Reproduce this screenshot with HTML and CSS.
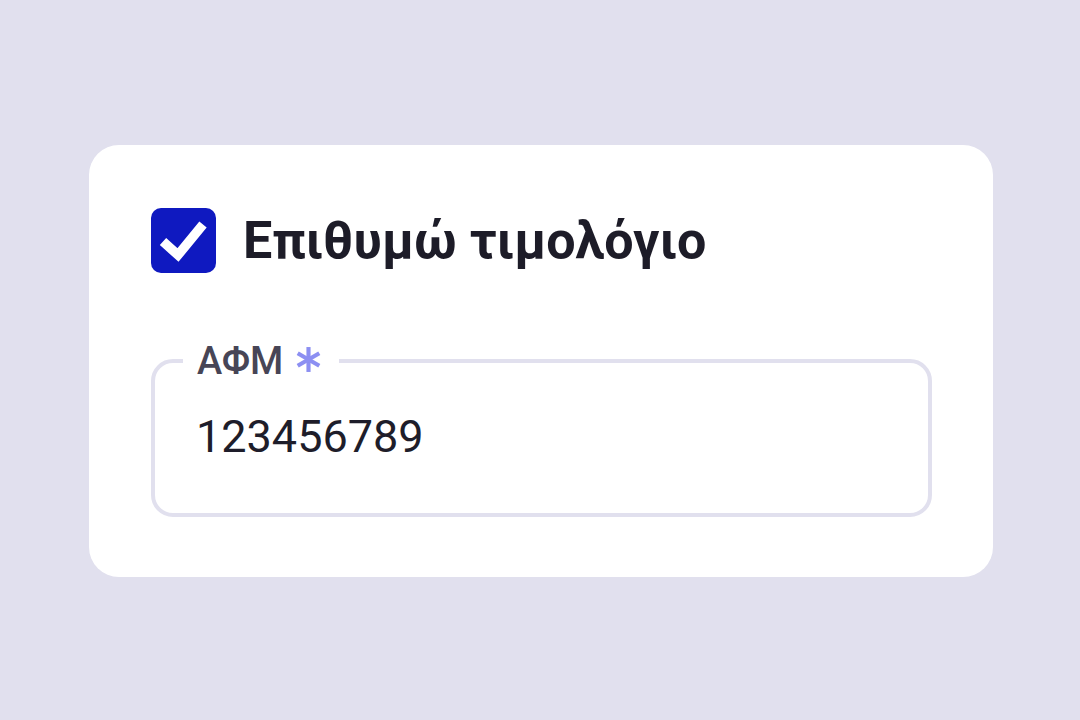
FILE: index.html
```html
<!DOCTYPE html>
<html lang="el">
<head>
<meta charset="utf-8">
<link rel="stylesheet" href="styles.css">
</head>
<body>
<main class="page">
  <section class="card">
    <label class="check-row">
      <span class="checkbox">
        <svg viewBox="0 0 65 65" width="65" height="65" aria-hidden="true">
          <path d="M12 33.5 L27 47 L52 16.5" fill="none" stroke="#fff" stroke-width="9.5" stroke-linecap="butt" stroke-linejoin="miter"/>
        </svg>
      </span>
      <span class="check-label">Επιθυμώ τιμολόγιο</span>
    </label>
    <fieldset class="field">
      <legend class="field-legend">ΑΦΜ<svg class="req" viewBox="0 0 26 26" width="27" height="27" aria-label="*"><g stroke="#8c8ff2" stroke-width="4" stroke-linecap="butt"><path d="M13 1 V25"/><path d="M2.6 7 L23.4 19"/><path d="M2.6 19 L23.4 7"/></g></svg></legend>
      <div class="field-value">123456789</div>
    </fieldset>
  </section>
</main>
</body>
</html>
```

FILE: styles.css
```css
html, body {
  margin: 0;
  padding: 0;
}
body {
  background: #e1e0ee;
  font-family: Roboto, "Noto Sans", sans-serif;
  width: 1080px;
  height: 720px;
}
.page {
  padding-top: 145px;
  padding-left: 89px;
}
.card {
  width: 904px;
  height: 432px;
  box-sizing: border-box;
  background: #ffffff;
  border-radius: 30px;
  padding: 63px 61px 0 62px;
}
.check-row {
  display: flex;
  align-items: center;
  gap: 27px;
}
.checkbox {
  width: 65px;
  height: 65px;
  border-radius: 10px;
  background: #0f19c0;
  display: block;
  flex: none;
}
.checkbox svg {
  display: block;
}
.check-label {
  font-size: 52px;
  font-weight: 700;
  color: #1d1c28;
}
.field {
  margin: 66px 0 0 0;
  border: 4px solid #e1e0ee;
  border-radius: 22px;
  padding: 0 28px 50px 28px;
}
.field-legend {
  padding: 0 17px 0 14px;
  font-size: 38px;
  font-weight: 500;
  color: #474556;
  display: flex;
  align-items: center;
  gap: 12px;
}
.req {
  display: block;
  margin-top: -4px;
}
.field-value {
  font-size: 45px;
  color: #1e1d2a;
  margin-top: 27px;
  padding-left: 13px;
}
```
